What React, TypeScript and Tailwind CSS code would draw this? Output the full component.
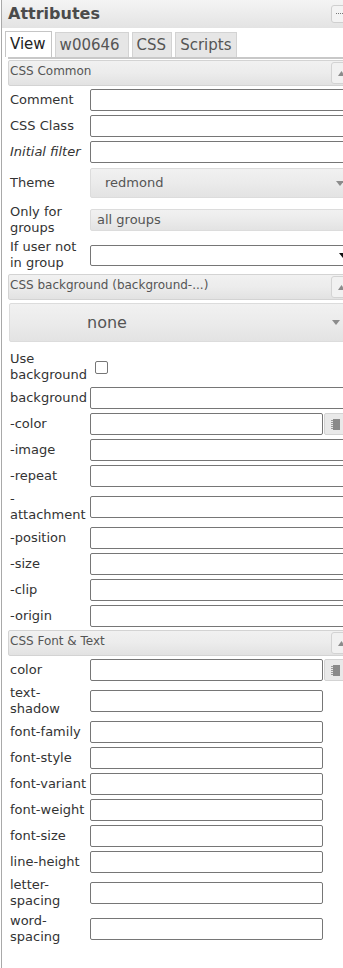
import React from "react";

const font = "font-['DejaVu_Sans','Liberation_Sans',sans-serif]";

function DownArrow({ className = "" }: { className?: string }) {
  return (
    <svg width="8" height="5" viewBox="0 0 8 5" className={className}>
      <path d="M0 0h8L4 5z" fill="#8c8c8c" />
    </svg>
  );
}

function SectionHeader({ title }: { title: string }) {
  return (
    <div className="flex h-[26px] items-start rounded-[2px] border border-[#d3d3d3] bg-[linear-gradient(to_bottom,#f1f1f1_0%,#ececec_50%,#e2e2e2_100%)] pl-[1px] pt-[1px]">
      <span className="flex-1 pt-[1px] text-[12px] leading-4 text-[#555]">{title}</span>
      <div className="mr-[1px] flex h-[22px] w-[22px] shrink-0 items-center rounded-[3px] border border-[#d3d3d3] bg-[#f1f1f1] pl-[6px]">
        <svg width="7" height="5" viewBox="0 0 7 5">
          <path d="M0 5h7L3.5 0z" fill="#8c8c8c" />
        </svg>
      </div>
    </div>
  );
}

function PickerButton() {
  return (
    <div className="ml-[1px] flex h-[22px] w-[24px] shrink-0 items-center rounded-[2px] border border-[#d3d3d3] bg-[#e9e9e9] pl-[6px]">
      <svg width="9" height="11" viewBox="0 0 9 11">
        <rect x="2" y="0" width="7" height="11" fill="#8a8a8a" />
        <rect x="0" y="1" width="2" height="1" fill="#9a9a9a" />
        <rect x="0" y="3" width="2" height="1" fill="#9a9a9a" />
        <rect x="0" y="5" width="2" height="1" fill="#9a9a9a" />
        <rect x="0" y="7" width="2" height="1" fill="#9a9a9a" />
        <rect x="0" y="9" width="2" height="1" fill="#9a9a9a" />
      </svg>
    </div>
  );
}

function Row({
  label,
  italic,
  children,
  className = "py-[2px]",
}: {
  label: string;
  italic?: boolean;
  children: React.ReactNode;
  className?: string;
}) {
  return (
    <div className={`flex items-center ${className}`}>
      <div className={`w-[82px] shrink-0 px-[2px] text-[13px] leading-4 text-[#333] ${italic ? "italic" : ""}`}>
        {label}
      </div>
      {children}
    </div>
  );
}

function TextBox({ wide = true }: { wide?: boolean }) {
  return (
    <input
      type="text"
      className={`h-[22px] shrink-0 rounded-[2px] border border-[#767676] bg-white ${wide ? "w-[270px]" : "w-[233px]"}`}
    />
  );
}

const bgRows = ["background", "-color", "-image", "-repeat", "-attachment", "-position", "-size", "-clip", "-origin"];
const fontRows = [
  "text-shadow",
  "font-family",
  "font-style",
  "font-variant",
  "font-weight",
  "font-size",
  "line-height",
  "letter-spacing",
  "word-spacing",
];

const glass = "bg-[linear-gradient(to_bottom,#f1f1f1_0%,#ebebeb_50%,#e3e3e3_100%)]";

export default function App() {
  return (
    <div className={`h-[968px] w-[343px] overflow-hidden bg-white ${font}`}>
      <div className="ml-[1px] h-full w-[354px] border-l border-[#a9a9a9]">
        {/* title bar */}
        <div className="flex h-[28px] items-center bg-[linear-gradient(to_bottom,#f4f4f4_0%,#ececec_50%,#e3e3e3_100%)] pl-[6px]">
          <span className="flex-1 text-[16px] font-bold leading-none text-[#4b4b4b]">Attributes</span>
          <div className="mr-[2px] flex h-[18px] w-[22px] items-center rounded-[3px] border border-[#cfcfcf] bg-[#f3f3f3] pl-[4px]">
            <svg width="8" height="2" viewBox="0 0 8 2">
              <rect x="0" y="0" width="1" height="1" fill="#777" />
              <rect x="2" y="0" width="1" height="1" fill="#777" />
              <rect x="4" y="0" width="1" height="1" fill="#777" />
              <rect x="6" y="0" width="1" height="1" fill="#777" />
            </svg>
          </div>
        </div>

        {/* tabs */}
        <div className="flex h-[29px] items-end gap-[3px] pl-[3px]">
          <div className="flex h-[26px] items-center border border-b-0 border-[#c5c5c5] bg-white pl-[4px] pr-[5px] text-[15px] text-[#222]">
            View
          </div>
          <div className="flex h-[25px] items-center border border-b-0 border-[#d3d3d3] bg-[#e6e6e6] pl-[4px] pr-[8px] text-[15px] text-[#555]">
            w00646
          </div>
          <div className="flex h-[25px] items-center border border-b-0 border-[#d3d3d3] bg-[#e6e6e6] pl-[4px] pr-[5px] text-[15px] text-[#555]">
            CSS
          </div>
          <div className="flex h-[25px] items-center border border-b-0 border-[#d3d3d3] bg-[#e6e6e6] pl-[4px] pr-[5px] text-[15px] text-[#555]">
            Scripts
          </div>
        </div>

        <div className="ml-[6px] border-t-2 border-[#c8c8c8] pt-[1px]">
          {/* CSS Common */}
          <SectionHeader title="CSS Common" />
          <div className="pt-[1px]">
            <Row label="Comment">
              <TextBox />
            </Row>
            <Row label="CSS Class">
              <TextBox />
            </Row>
            <Row label="Initial filter" italic>
              <TextBox />
            </Row>
            <Row label="Theme" className="py-[3px]">
              <div className={`flex h-[30px] w-[270px] items-center rounded-[2px] border border-[#dcdcdc] ${glass} pl-[14px] text-[13px] text-[#555]`}>
                redmond
                <DownArrow className="ml-[173px]" />
              </div>
            </Row>
            <Row label="Only for groups" className="pt-[3px] pb-[1px]">
              <div className={`flex h-[22px] w-[270px] items-center rounded-[2px] border border-[#dcdcdc] ${glass} pl-[6px] text-[13px] text-[#555]`}>
                all groups
              </div>
            </Row>
            <Row label="If user not in group">
              <div className="flex h-[21px] w-[270px] items-center rounded-[2px] border border-[#767676] bg-white pl-[248px]">
                <svg width="8" height="5" viewBox="0 0 8 5">
                  <path d="M0 0h8L4 5z" fill="#111" />
                </svg>
              </div>
            </Row>
          </div>

          {/* CSS background */}
          <div className="mt-[1px]">
            <SectionHeader title="CSS background (background-...)" />
          </div>
          <div className={`ml-[1px] mt-[3px] flex h-[39px] items-center rounded-[2px] border border-[#dcdcdc] ${glass} pl-[77px] text-[16px] text-[#555]`}>
            none
            <DownArrow className="ml-[205px]" />
          </div>
          <div className="pt-[7px]">
            <Row label="Use background">
              <input
                type="checkbox"
                className="ml-[5px] h-[13px] w-[13px] appearance-none rounded-[2px] border border-[#767676] bg-white"
              />
            </Row>
            {bgRows.map((r) => (
              <Row key={r} label={r}>
                {r === "-color" ? (
                  <>
                    <TextBox wide={false} />
                    <PickerButton />
                  </>
                ) : (
                  <TextBox />
                )}
              </Row>
            ))}
          </div>

          {/* CSS Font & Text */}
          <div className="mt-[1px]">
            <SectionHeader title="CSS Font & Text" />
          </div>
          <div className="pt-[1px]">
            <Row label="color">
              <TextBox wide={false} />
              <PickerButton />
            </Row>
            {fontRows.map((r) => (
              <Row key={r} label={r}>
                <TextBox wide={false} />
              </Row>
            ))}
          </div>
        </div>
      </div>
    </div>
  );
}
